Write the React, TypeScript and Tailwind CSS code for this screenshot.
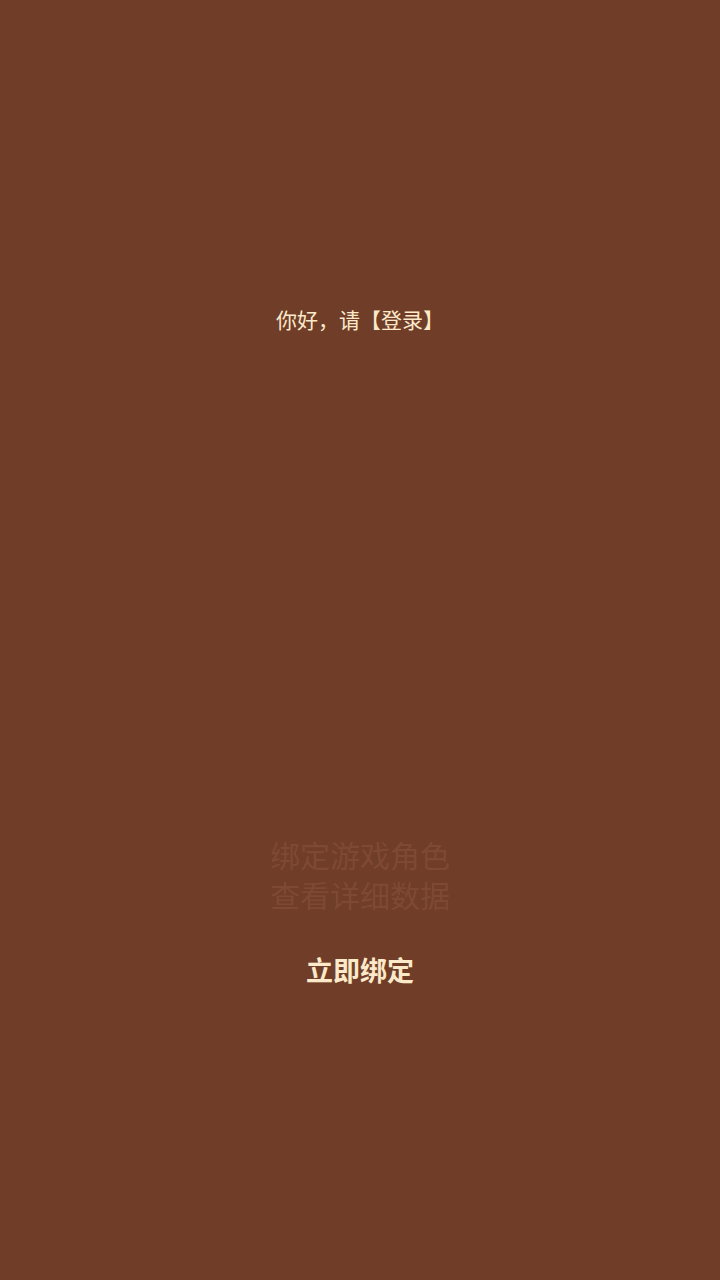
export default function App() {
  return (
    <div
      className="w-full min-h-[1280px] bg-[#6f3d28] flex flex-col items-center"
      style={{ fontFamily: '"Noto Sans CJK SC", "Noto Sans", sans-serif' }}
    >
      <div className="pt-[305px] text-[21px] leading-[28px] text-[#fbe9c9]">
        你好，请【登录】
      </div>

      <div className="mt-[507px] flex flex-col items-center gap-[12px] text-[30px] leading-[28px] text-[#7e4934]">
        <span>绑定游戏角色</span>
        <span>查看详细数据</span>
      </div>

      <button className="mt-[44px] text-[27px] leading-[36px] font-bold text-[#fbe9c9]">
        立即绑定
      </button>
    </div>
  );
}
